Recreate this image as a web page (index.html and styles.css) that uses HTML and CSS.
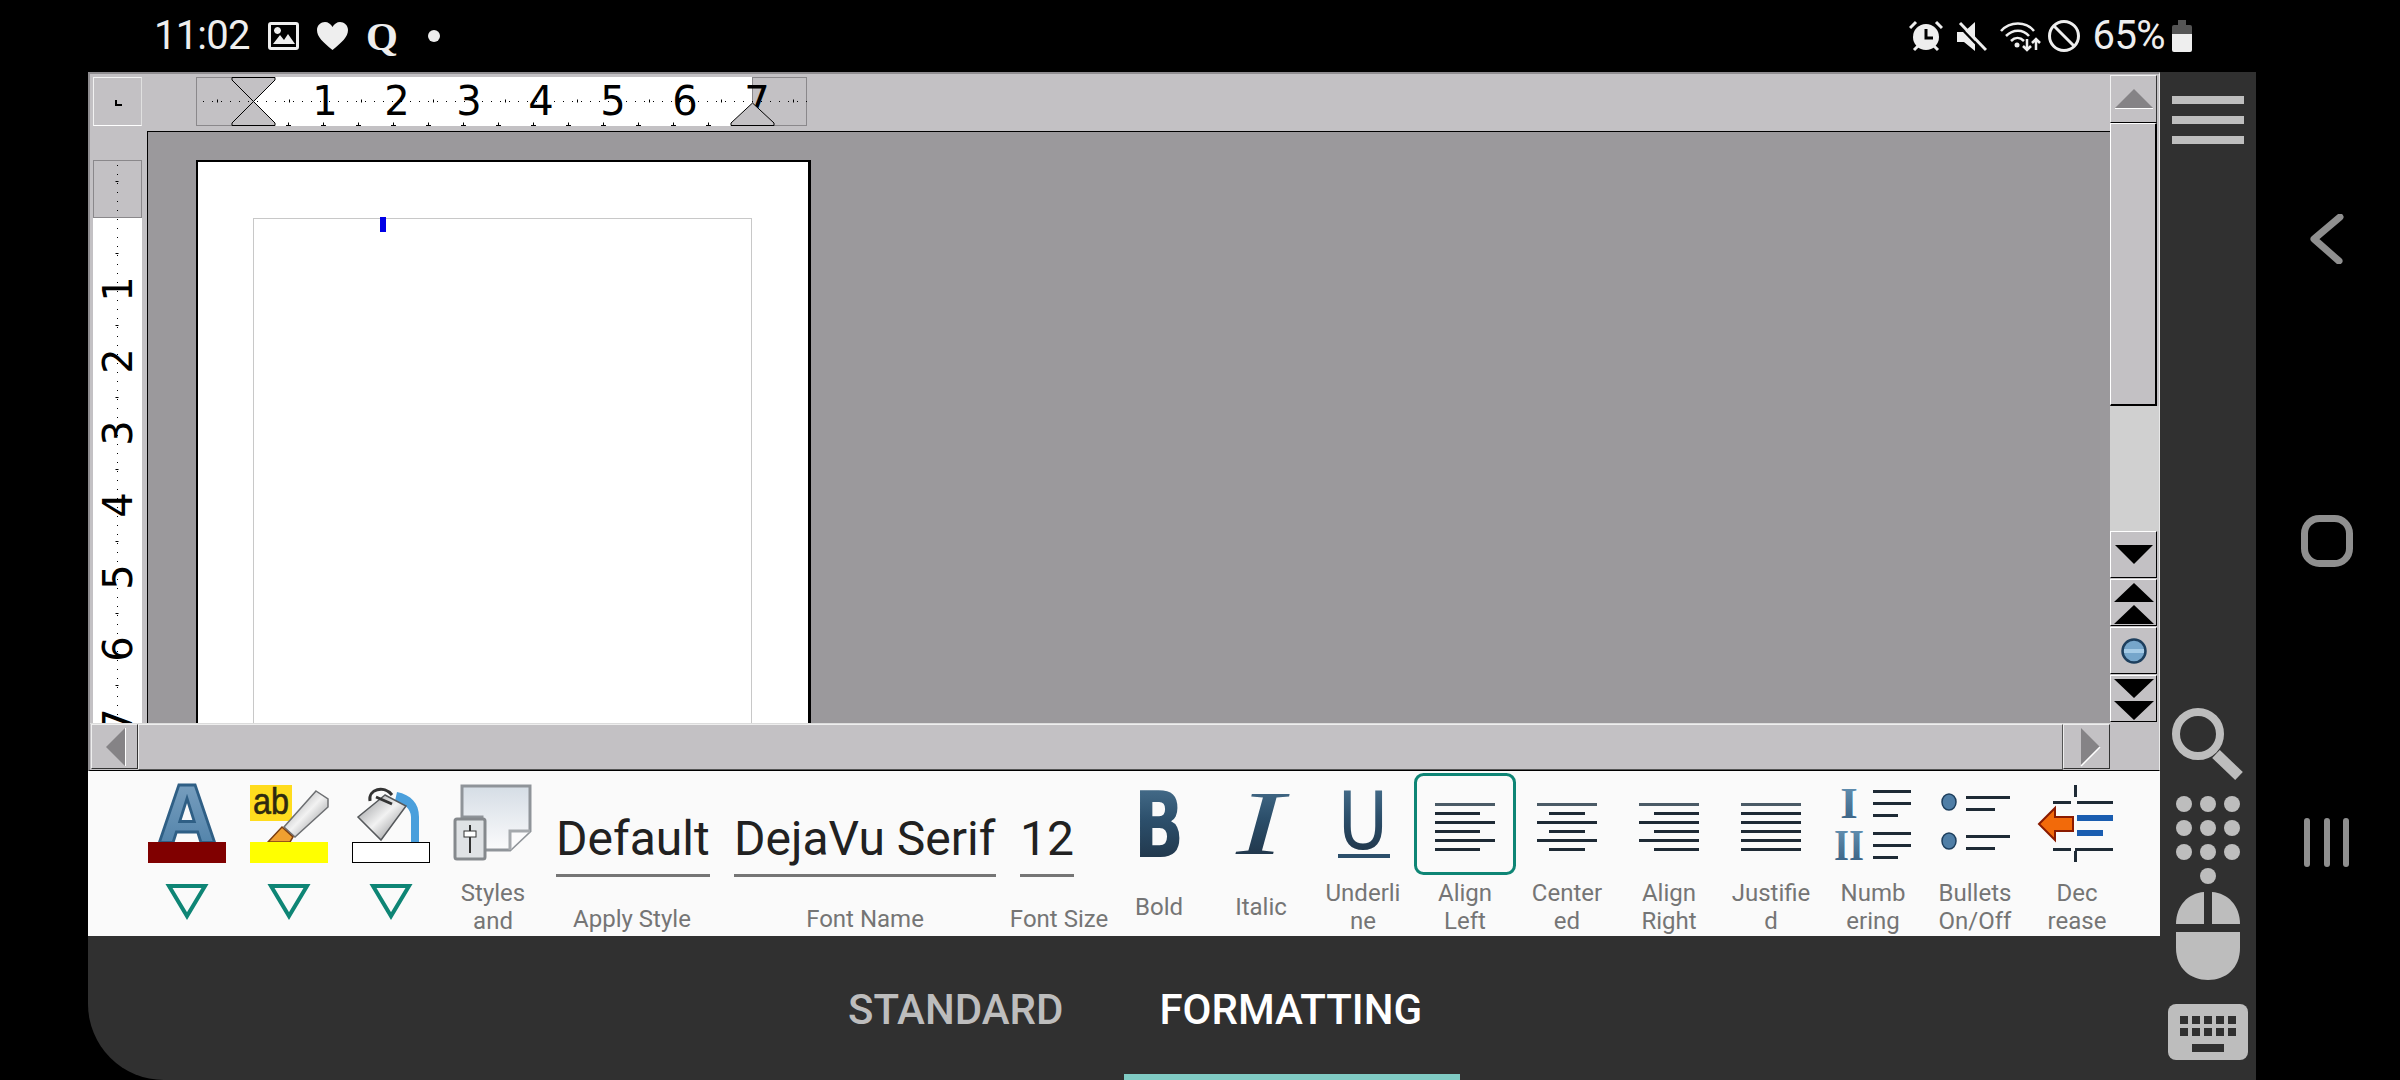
FILE: index.html
```html
<!DOCTYPE html>
<html lang="en">
<head>
    <meta charset="UTF-8">
    <title>Writer - Formatting</title>
    <link rel="stylesheet" href="styles.css">
</head>
<body>
<svg class="defs" width="0" height="0">
    <defs>
        <linearGradient id="steel" x1="0" y1="0" x2="0" y2="1">
            <stop offset="0" stop-color="#4f7896"/>
            <stop offset="0.45" stop-color="#2c4f6b"/>
            <stop offset="1" stop-color="#1c2c3d"/>
        </linearGradient>
        <linearGradient id="letterA" x1="0" y1="0" x2="0" y2="1">
            <stop offset="0" stop-color="#7fa4c2"/>
            <stop offset="1" stop-color="#4a7da6"/>
        </linearGradient>
        <linearGradient id="numeral" x1="0" y1="0" x2="0" y2="1">
            <stop offset="0" stop-color="#6b9abb"/>
            <stop offset="1" stop-color="#33597c"/>
        </linearGradient>
        <linearGradient id="metal" x1="0" y1="0" x2="1" y2="1">
            <stop offset="0" stop-color="#8d8f92"/>
            <stop offset="0.5" stop-color="#f2f2f2"/>
            <stop offset="1" stop-color="#77797c"/>
        </linearGradient>
        <linearGradient id="paper" x1="0" y1="0" x2="0" y2="1">
            <stop offset="0" stop-color="#d5dde5"/>
            <stop offset="1" stop-color="#fbfbfc"/>
        </linearGradient>
    </defs>
</svg>

<div class="screen">
    <div class="status">
        <div class="status-left">
            <span class="status-text time">11:02</span>
            <svg class="ic" width="31" height="28" viewBox="0 0 31 28"><path fill="#eee" fill-rule="evenodd" d="M3 0H28A3 3 0 0 1 31 3V25A3 3 0 0 1 28 28H3A3 3 0 0 1 0 25V3A3 3 0 0 1 3 0ZM3 3V25H28V3ZM5 22 12 13 16 18 20 12 27 22ZM9.500 5A3.500 3.500 0 1 1 9.490 5Z"/></svg>
            <svg class="ic" width="31" height="28" viewBox="0 0 31 28"><path fill="#eee" d="M15.500 28C6 20 0 15 0 8 0 3 4 0 8 0 11 0 14 2 15.500 5 17 2 20 0 23 0 27 0 31 3 31 8 31 15 25 20 15.500 28Z"/></svg>
            <span class="status-q">Q</span>
            <span class="status-dot"></span>
        </div>
        <div class="status-right">
            <svg class="ic ic-alarm" width="34" height="32" viewBox="0 0 34 32">
                <path d="M1 8 7 2M33 8 27 2M5 30 9 26M29 30 25 26" stroke="#eee" stroke-width="3" fill="none"/>
                <circle cx="17" cy="17" r="13" fill="#eee"/>
                <path d="M17 9V18H24" stroke="#000" stroke-width="3" fill="none"/>
            </svg>
            <svg class="ic ic-mute" width="30" height="31" viewBox="0 0 30 31">
                <path fill="#eee" d="M0 11H7L18 1V30L7 21H0Z"/>
                <path d="M0 3 26 30" stroke="#000" stroke-width="2.500"/>
                <path d="M3 2 29 29" stroke="#eee" stroke-width="3"/>
            </svg>
            <svg class="ic ic-wifi" width="41" height="31" viewBox="0 0 41 31">
                <g stroke="#eee" stroke-width="2.500" fill="none">
                    <path d="M1 10C10 0 26 0 34 10"/>
                    <path d="M6 15C13 8 23 8 29 15"/>
                    <path d="M11 20C15 16 20 16 24 20"/>
                    <path d="M27 18V29M23 25 27 29 31 25"/>
                    <path d="M36 29V18M32 22 36 18 40 22"/>
                </g>
                <circle cx="17" cy="24" r="2.500" fill="#eee"/>
            </svg>
            <svg class="ic ic-block" width="32" height="32" viewBox="0 0 32 32">
                <circle cx="16" cy="16" r="14.500" stroke="#eee" stroke-width="3" fill="none"/>
                <path d="M6 6 26 26" stroke="#eee" stroke-width="3"/>
            </svg>
            <span class="status-text pct">65%</span>
            <svg class="ic" width="20" height="32" viewBox="0 0 20 32">
                <path fill="#555" d="M6 0H14V5H18A2 2 0 0 1 20 7V14H0V7A2 2 0 0 1 2 5H6Z"/>
                <path fill="#eee" d="M0 14H20V30A2 2 0 0 1 18 32H2A2 2 0 0 1 0 30Z"/>
            </svg>
        </div>
    </div>

    <div class="app">
        <div class="office">
            <div class="corner-cell">
                <div class="corner-btn">
                    <svg width="47" height="47" viewBox="0 0 47 47"><path d="M22 22V27H28" stroke="#000" stroke-width="2" fill="none"/></svg>
                </div>
            </div>

            <div class="hruler-cell">
                <svg class="hruler" width="611" height="49" viewBox="0 0 611 49">
                    <rect x="0" y="0" width="611" height="49" fill="#fff"/>
                    <rect x="0.500" y="0.500" width="57" height="48" class="margin-area"/>
                    <rect x="556.500" y="0.500" width="54" height="48" class="margin-area"/>
                    <line x1="7" y1="24.500" x2="611" y2="24.500" class="dots"/>
                    <line x1="21" y1="24" x2="611" y2="24" class="half-ticks"/>
                    <line x1="92" y1="47" x2="560" y2="47" class="low-ticks"/>
                    <line x1="90" y1="48.500" x2="560" y2="48.500" class="low-base"/>
                    <text x="129" y="38" class="ruler-num">1</text>
                    <text x="201" y="38" class="ruler-num">2</text>
                    <text x="273" y="38" class="ruler-num">3</text>
                    <text x="345" y="38" class="ruler-num">4</text>
                    <text x="417" y="38" class="ruler-num">5</text>
                    <text x="489" y="38" class="ruler-num">6</text>
                    <text x="561" y="38" class="ruler-num">7</text>
                    <path class="marker" d="M36 .5H79V3L57.500 24.500 36 3Z"/>
                    <path class="marker" d="M57.500 24.500 79 46V48.500H36V46Z"/>
                    <path class="marker" d="M556.500 26 578 46V48.500H535V46Z"/>
                </svg>
            </div>

            <div class="scroll-v">
                <div class="sb-btn sb-up">
                    <svg width="44" height="44" viewBox="0 0 44 44">
                        <path d="M22 12 41 31H3Z" fill="#858386"/>
                        <path d="M3 31.500H41" stroke="#fff"/>
                    </svg>
                </div>
                <div class="sb-thumb"></div>
                <div class="sb-track"></div>
                <div class="sb-btn sb-small">
                    <svg width="44" height="44" viewBox="0 0 44 44"><path d="M3 12H41L22 31Z"/></svg>
                </div>
                <div class="sb-btn sb-small">
                    <svg width="44" height="44" viewBox="0 0 44 44"><path d="M22 2 42 21H2ZM22 24 42 43H2Z"/></svg>
                </div>
                <div class="sb-btn sb-small">
                    <svg width="44" height="44" viewBox="0 0 44 44">
                        <circle cx="22" cy="22" r="11.500" fill="#76a6cb" stroke="#1d3f5e" stroke-width="2.500"/>
                        <rect x="12" y="20" width="20" height="4" fill="#a5cbe6"/>
                    </svg>
                </div>
                <div class="sb-btn sb-small">
                    <svg width="44" height="44" viewBox="0 0 44 44"><path d="M2 2H42L22 21ZM2 24H42L22 43Z"/></svg>
                </div>
            </div>

            <div class="vruler-cell">
                <svg class="vruler" width="49" height="563" viewBox="0 0 49 563">
                    <rect x="0" y="0" width="49" height="563" fill="#fff"/>
                    <rect x="0.500" y="0.500" width="48" height="57" class="margin-area"/>
                    <line x1="24.500" y1="5" x2="24.500" y2="563" class="dots"/>
                    <line x1="24" y1="21" x2="24" y2="563" class="half-ticks"/>
                    <text transform="translate(39 129) rotate(-90)" class="ruler-num">1</text>
                    <text transform="translate(39 201) rotate(-90)" class="ruler-num">2</text>
                    <text transform="translate(39 273) rotate(-90)" class="ruler-num">3</text>
                    <text transform="translate(39 345) rotate(-90)" class="ruler-num">4</text>
                    <text transform="translate(39 417) rotate(-90)" class="ruler-num">5</text>
                    <text transform="translate(39 489) rotate(-90)" class="ruler-num">6</text>
                    <text transform="translate(39 561) rotate(-90)" class="ruler-num">7</text>
                </svg>
            </div>

            <div class="doc">
                <div class="page">
                    <div class="page-body">
                        <div class="cursor"></div>
                    </div>
                </div>
            </div>

            <div class="scroll-h">
                <div class="sb-btn sb-h">
                    <svg width="44" height="44" viewBox="0 0 44 44">
                        <path d="M13 22 32 3V41Z" fill="#858386"/>
                        <path d="M32.500 3V41" stroke="#fff"/>
                    </svg>
                </div>
                <div class="sb-hthumb"></div>
                <div class="sb-btn sb-h">
                    <svg width="44" height="44" viewBox="0 0 44 44">
                        <path d="M16 3 35 22 16 41Z" fill="#858386"/>
                        <path d="M35 22 16 41" stroke="#fff" stroke-width="1.500"/>
                    </svg>
                </div>
            </div>
            <div class="corner-end"></div>
        </div>

        <div class="toolbar">
            <div class="tool">
                <svg width="102" height="165" viewBox="0 0 102 165">
                    <text x="51" y="71" textLength="56" lengthAdjust="spacingAndGlyphs" class="glyph-a">A</text>
                    <rect x="12" y="71" width="78" height="21" fill="#800000"/>
                    <path d="M33 115H69L51 145Z" class="drop"/>
                </svg>
            </div>
            <div class="tool">
                <svg width="102" height="165" viewBox="0 0 102 165">
                    <rect x="12" y="14" width="42" height="36" fill="#ffdc1e"/>
                    <text x="33" y="43" textLength="36" lengthAdjust="spacingAndGlyphs" class="glyph-ab">ab</text>
                    <path d="M78 20 90 28 90 36 57 66 46 56Z" fill="url(#metal)" stroke="#6d6f72" stroke-width="1.500"/>
                    <path d="M44 56 55 66 52 71H30Z" fill="#f0a030" stroke="#7a3d10" stroke-width="1.500"/>
                    <rect x="12" y="71" width="78" height="21" fill="#ffff00"/>
                    <path d="M33 115H69L51 145Z" class="drop"/>
                </svg>
            </div>
            <div class="tool">
                <svg width="102" height="165" viewBox="0 0 102 165">
                    <path d="M57 21C71 24 79 32 79 46V71H71V46C71 38 64 32 55 30Z" fill="#4a9fdc"/>
                    <path d="M45 24 18 46 41 69 66 35Z" fill="url(#metal)" stroke="#55585b" stroke-width="1.500"/>
                    <path d="M30 30C28 18 44 14 52 24M36 26 52 33" stroke="#333" stroke-width="3" fill="none"/>
                    <rect x="12.500" y="71.500" width="77" height="20" fill="#fff" stroke="#000"/>
                    <path d="M33 115H69L51 145Z" class="drop"/>
                </svg>
            </div>
            <div class="tool">
                <div class="tool-icon">
                    <svg width="102" height="108" viewBox="0 0 102 108">
                        <path d="M20 15H88V60L68 79H40V46H20Z" fill="url(#paper)" stroke="#8f9499" stroke-width="3"/>
                        <path d="M68 79V60H88" fill="#fbfbfc" stroke="#a5a9ad" stroke-width="3"/>
                        <rect x="13" y="48" width="30" height="40" rx="2" fill="#dfe2e5" stroke="#85898d" stroke-width="3"/>
                        <path d="M28 54V82" stroke="#333" stroke-width="2"/>
                        <rect x="22" y="60" width="12" height="6" fill="#fff" stroke="#333"/>
                    </svg>
                </div>
                <div class="tool-label">Styles<br>and</div>
            </div>

            <div class="field field-style">
                <div class="field-value">Default</div>
                <div class="field-label">Apply Style</div>
            </div>
            <div class="field field-font">
                <div class="field-value">DejaVu Serif</div>
                <div class="field-label">Font Name</div>
            </div>
            <div class="field field-size">
                <div class="field-value">12</div>
                <div class="field-label">Font Size</div>
            </div>

            <div class="tool">
                <div class="tool-icon">
                    <svg width="102" height="108" viewBox="0 0 102 108">
                        <text x="51" y="86" textLength="50" lengthAdjust="spacingAndGlyphs" class="glyph-fmt glyph-b">B</text>
                    </svg>
                </div>
                <div class="tool-label">Bold</div>
            </div>
            <div class="tool">
                <div class="tool-icon">
                    <svg width="102" height="108" viewBox="0 0 102 108">
                        <text x="50" y="83" textLength="48" lengthAdjust="spacingAndGlyphs" class="glyph-fmt glyph-i">I</text>
                    </svg>
                </div>
                <div class="tool-label">Italic</div>
            </div>
            <div class="tool">
                <div class="tool-icon">
                    <svg width="102" height="108" viewBox="0 0 102 108">
                        <text x="51" y="78" textLength="50" lengthAdjust="spacingAndGlyphs" class="glyph-fmt glyph-u">U</text>
                        <rect x="26" y="83" width="52" height="4" fill="#2c4f6b"/>
                    </svg>
                </div>
                <div class="tool-label">Underli<br>ne</div>
            </div>
            <div class="tool">
                <div class="tool-icon">
                    <svg width="102" height="108" viewBox="0 0 102 108">
                        <rect x="1.500" y="3.500" width="99" height="99" rx="8" fill="none" stroke="#0e8575" stroke-width="3"/>
                        <rect x="21" y="32" width="60" height="3" class="line-top"/>
                        <rect x="21" y="41" width="45" height="3" class="line"/>
                        <rect x="21" y="50" width="60" height="3" class="line"/>
                        <rect x="21" y="59" width="45" height="3" class="line"/>
                        <rect x="21" y="68" width="60" height="3" class="line"/>
                        <rect x="21" y="77" width="45" height="3" class="line"/>
                    </svg>
                </div>
                <div class="tool-label">Align<br>Left</div>
            </div>
            <div class="tool">
                <div class="tool-icon">
                    <svg width="102" height="108" viewBox="0 0 102 108">
                        <rect x="21" y="32" width="60" height="3" class="line-top"/>
                        <rect x="33" y="41" width="36" height="3" class="line"/>
                        <rect x="21" y="50" width="60" height="3" class="line"/>
                        <rect x="33" y="59" width="36" height="3" class="line"/>
                        <rect x="21" y="68" width="60" height="3" class="line"/>
                        <rect x="33" y="77" width="36" height="3" class="line"/>
                    </svg>
                </div>
                <div class="tool-label">Center<br>ed</div>
            </div>
            <div class="tool">
                <div class="tool-icon">
                    <svg width="102" height="108" viewBox="0 0 102 108">
                        <rect x="21" y="32" width="60" height="3" class="line-top"/>
                        <rect x="36" y="41" width="45" height="3" class="line"/>
                        <rect x="21" y="50" width="60" height="3" class="line"/>
                        <rect x="36" y="59" width="45" height="3" class="line"/>
                        <rect x="21" y="68" width="60" height="3" class="line"/>
                        <rect x="36" y="77" width="45" height="3" class="line"/>
                    </svg>
                </div>
                <div class="tool-label">Align<br>Right</div>
            </div>
            <div class="tool">
                <div class="tool-icon">
                    <svg width="102" height="108" viewBox="0 0 102 108">
                        <rect x="21" y="32" width="60" height="3" class="line-top"/>
                        <rect x="21" y="41" width="60" height="3" class="line"/>
                        <rect x="21" y="50" width="60" height="3" class="line"/>
                        <rect x="21" y="59" width="60" height="3" class="line"/>
                        <rect x="21" y="68" width="60" height="3" class="line"/>
                        <rect x="21" y="77" width="60" height="3" class="line"/>
                    </svg>
                </div>
                <div class="tool-label">Justifie<br>d</div>
            </div>
            <div class="tool">
                <div class="tool-icon">
                    <svg width="102" height="108" viewBox="0 0 102 108">
                        <text x="27" y="47" class="glyph-num">I</text>
                        <text x="27" y="89" textLength="30" lengthAdjust="spacingAndGlyphs" class="glyph-num">II</text>
                        <rect x="51" y="19" width="38" height="3" class="line"/>
                        <rect x="51" y="31" width="38" height="3" class="line"/>
                        <rect x="51" y="43" width="25" height="3" class="line"/>
                        <rect x="51" y="61" width="38" height="3" class="line"/>
                        <rect x="51" y="73" width="38" height="3" class="line"/>
                        <rect x="51" y="85" width="25" height="3" class="line"/>
                    </svg>
                </div>
                <div class="tool-label">Numb<br>ering</div>
            </div>
            <div class="tool">
                <div class="tool-icon">
                    <svg width="102" height="108" viewBox="0 0 102 108">
                        <ellipse cx="25" cy="31" rx="7" ry="8" class="bullet"/>
                        <ellipse cx="25" cy="70" rx="7" ry="8" class="bullet"/>
                        <rect x="42" y="25" width="44" height="3" class="line"/>
                        <rect x="42" y="37" width="29" height="3" class="line"/>
                        <rect x="42" y="64" width="44" height="3" class="line"/>
                        <rect x="42" y="76" width="29" height="3" class="line"/>
                    </svg>
                </div>
                <div class="tool-label">Bullets<br>On/Off</div>
            </div>
            <div class="tool">
                <div class="tool-icon">
                    <svg width="102" height="108" viewBox="0 0 102 108">
                        <rect x="48" y="14" width="3" height="12" class="line"/>
                        <rect x="27" y="30" width="18" height="3" class="line"/>
                        <rect x="51" y="30" width="36" height="3" class="line"/>
                        <rect x="51" y="44" width="36" height="6" fill="#1a5db0"/>
                        <rect x="51" y="59" width="26" height="6" fill="#1a5db0"/>
                        <path d="M13 53 29 37V46H47V60H29V69Z" fill="#f26a0a" stroke="#8a1a00" stroke-width="2"/>
                        <rect x="27" y="77" width="18" height="3" class="line"/>
                        <rect x="49" y="77" width="38" height="3" class="line"/>
                        <rect x="48" y="80" width="3" height="11" class="line"/>
                    </svg>
                </div>
                <div class="tool-label">Dec<br>rease</div>
            </div>
        </div>

        <div class="tabs">
            <div class="tab">STANDARD</div>
            <div class="tab tab-active">FORMATTING</div>
        </div>
    </div>

    <div class="side">
        <div class="hamburger">
            <span></span>
            <span></span>
            <span></span>
        </div>
        <svg class="side-search" width="96" height="84" viewBox="0 0 96 84">
            <circle cx="38" cy="30" r="22" fill="none" stroke="#bdbdbd" stroke-width="8"/>
            <path d="M56 50 79 72" stroke="#bdbdbd" stroke-width="11"/>
        </svg>
        <svg class="side-remote" width="96" height="184" viewBox="0 0 96 184">
            <g fill="#bdbdbd">
                <circle cx="24" cy="8" r="8"/><circle cx="48" cy="8" r="8"/><circle cx="72" cy="8" r="8"/>
                <circle cx="24" cy="32" r="8"/><circle cx="48" cy="32" r="8"/><circle cx="72" cy="32" r="8"/>
                <circle cx="24" cy="56" r="8"/><circle cx="48" cy="56" r="8"/><circle cx="72" cy="56" r="8"/>
                <circle cx="48" cy="80" r="8"/>
                <path d="M16 128C16 110 28 97 44 96V128Z"/>
                <path d="M80 128C80 110 68 97 52 96V128Z"/>
                <path d="M16 136H80V152C80 172 66 184 48 184 30 184 16 172 16 152Z"/>
            </g>
        </svg>
        <svg class="side-keys" width="96" height="56" viewBox="0 0 96 56">
            <rect x="8" y="0" width="80" height="56" rx="8" fill="#bdbdbd"/>
            <g fill="#303030">
                <rect x="20" y="12" width="8" height="8"/><rect x="32" y="12" width="8" height="8"/><rect x="44" y="12" width="8" height="8"/><rect x="56" y="12" width="8" height="8"/><rect x="68" y="12" width="8" height="8"/>
                <rect x="20" y="24" width="8" height="8"/><rect x="32" y="24" width="8" height="8"/><rect x="44" y="24" width="8" height="8"/><rect x="56" y="24" width="8" height="8"/><rect x="68" y="24" width="8" height="8"/>
                <rect x="32" y="40" width="32" height="8"/>
            </g>
        </svg>
    </div>

    <div class="nav">
        <svg width="34" height="50" viewBox="0 0 34 50"><path d="M30 3 4 25 29 47" class="nav-stroke"/></svg>
        <svg width="52" height="52" viewBox="0 0 52 52"><rect x="3.500" y="3.500" width="45" height="45" rx="15" class="nav-stroke"/></svg>
        <svg width="46" height="49" viewBox="0 0 46 49">
            <rect x="0" y="0" width="6" height="49" rx="3" fill="#8f8f8f"/>
            <rect x="20" y="0" width="6" height="49" rx="3" fill="#8f8f8f"/>
            <rect x="39" y="0" width="6" height="49" rx="3" fill="#8f8f8f"/>
        </svg>
    </div>
</div>
</body>
</html>
```

FILE: styles.css
```css
body {
    margin: 0;
    background: #000;
    font-family: Roboto, "Noto Sans", sans-serif;
    overflow: hidden;
}
.defs {
    position: absolute;
}
svg {
    display: block;
}
.screen {
    display: grid;
    grid-template-columns: 88px 2072px 96px 144px;
    grid-template-rows: 72px 1008px;
    width: 2400px;
    height: 1080px;
}

/* status bar */
.status {
    grid-column: 1 / 5;
    display: flex;
    justify-content: space-between;
    align-items: center;
    padding: 0 208px 0 154px;
}
.status-left, .status-right {
    display: flex;
    align-items: center;
}
.status-text {
    color: #eee;
    font-size: 40px;
    line-height: 72px;
}
.time {
    width: 114px;
    letter-spacing: -0.8px;
}
.status-left .ic {
    margin-right: 18px;
}
.status-q {
    width: 62px;
    color: #eee;
    font-family: "Liberation Serif", serif;
    font-size: 41px;
    font-weight: bold;
}
.status-dot {
    width: 12px;
    height: 12px;
    border-radius: 50%;
    background: #eee;
}
.ic-alarm {
    margin-right: 14px;
}
.ic-mute {
    margin-right: 13px;
}
.ic-wifi {
    margin-right: 7px;
}
.ic-block {
    margin-right: 13px;
}
.pct {
    margin-right: 7px;
    letter-spacing: -0.6px;
}

.app {
    grid-column: 2;
    display: flex;
    flex-direction: column;
    height: 1008px;
}

/* libreoffice window */
.office {
    display: grid;
    grid-template-columns: 57px 1963px 49px;
    grid-template-rows: 57px 592px 47px;
    background: #c3c1c4;
    border-top: 2px solid #8f8d90;
    border-left: 2px solid #8f8d90;
    border-right: 1px solid #e8e8e8;
    border-bottom: 1px solid #000;
}
.corner-cell {
    padding: 3px 0 0 3px;
}
.corner-btn {
    width: 47px;
    height: 47px;
    border: 1px solid;
    border-color: #f2f2f2 #e0e0e0 #fff #f2f2f2;
}
.hruler-cell {
    padding: 3px 0 0 49px;
}
.margin-area {
    fill: #c3c1c4;
    stroke: #8a888b;
}
.dots {
    stroke: #000;
    stroke-width: 1;
    stroke-dasharray: 1 8;
}
.half-ticks {
    stroke: #000;
    stroke-width: 3;
    stroke-dasharray: 1 71;
}
.low-ticks {
    stroke: #000;
    stroke-width: 3;
    stroke-dasharray: 1 34;
}
.low-base {
    stroke: #000;
    stroke-width: 1;
    stroke-dasharray: 5 30;
}
.ruler-num {
    font-family: "DejaVu Sans", sans-serif;
    font-size: 40px;
    text-anchor: middle;
    fill: #000;
}
.marker {
    fill: #c3c1c4;
    stroke: #000;
    stroke-width: 1;
}
.vruler-cell {
    padding: 29px 0 0 3px;
    overflow: hidden;
}
.doc {
    background: #9b999c;
    border-top: 1px solid #000;
    border-left: 1px solid #000;
    padding: 28px 0 0 48px;
    overflow: hidden;
    height: 592px;
    box-sizing: border-box;
}
.page {
    width: 615px;
    height: 620px;
    background: #fff;
    border: solid #000;
    border-width: 2px 3px 0 2px;
    padding: 56px 0 0 55px;
    box-sizing: border-box;
}
.page-body {
    position: relative;
    width: 499px;
    height: 580px;
    border: 1px solid #c8c8c8;
    box-sizing: border-box;
}
.cursor {
    position: absolute;
    left: 126px;
    top: -2px;
    width: 6px;
    height: 15px;
    background: #0000e6;
}

/* scrollbars */
.scroll-v {
    grid-column: 3;
    grid-row: 1 / 3;
    display: flex;
    flex-direction: column;
    padding-top: 1px;
}
.sb-btn {
    display: flex;
    align-items: center;
    justify-content: center;
    box-sizing: border-box;
    flex: none;
    border: 1px solid;
    border-color: #fff #000 #000 #fff;
    background: #c3c1c4;
}
.sb-up {
    width: 47px;
    height: 48px;
    border-color: #f2f2f2 #333 #000 #f2f2f2;
}
.sb-thumb {
    width: 47px;
    height: 283px;
    box-sizing: border-box;
    flex: none;
    border: 1px solid;
    border-width: 1px 2px 2px 1px;
    border-color: #fff #000 #000 #fff;
}
.sb-track {
    flex: 1;
    background: #d0d0d0;
}
.sb-small {
    width: 47px;
    height: 47px;
    margin-bottom: 1px;
}
.sb-small path {
    fill: #000;
}
.scroll-h {
    grid-column: 1 / 3;
    display: flex;
    padding-left: 1px;
    background: #c3c1c4;
    border-top: 1px solid #dcdcdc;
}
.sb-h {
    width: 47px;
    height: 45px;
    border-color: #eee #333 #333 #eee;
}
.sb-hthumb {
    flex: 1;
    border: 1px solid;
    border-color: #eee #555 #555 #eee;
}
.corner-end {
    background: #c3c1c4;
}

/* toolbar */
.toolbar {
    display: flex;
    box-sizing: border-box;
    height: 165px;
    padding-left: 48px;
    background: #fafafa;
    overflow: hidden;
}
.tool {
    flex: none;
    width: 102px;
    height: 165px;
}
.tool-icon {
    height: 107px;
}
.tool-label, .field-label {
    display: flex;
    align-items: center;
    justify-content: center;
    height: 57px;
    color: #757575;
    font-size: 24px;
    line-height: 28px;
    text-align: center;
    white-space: nowrap;
}
.field {
    flex: none;
    display: flex;
    flex-direction: column;
    box-sizing: border-box;
}
.field-style {
    width: 176px;
}
.field-font {
    width: 290px;
}
.field-size {
    width: 98px;
}
.field-value {
    height: 73px;
    margin: 33px 0 2px 12px;
    box-sizing: border-box;
    padding-top: 7px;
    color: #212121;
    font-size: 48px;
    line-height: 56px;
    white-space: nowrap;
    border-bottom: 3px solid #757575;
}
.field-style .field-value {
    width: 154px;
}
.field-font .field-value {
    width: 262px;
    margin-left: 14px;
}
.field-size .field-value {
    width: 54px;
    margin-left: 10px;
}
.field-label {
    height: 57px;
    padding-top: 22px;
    box-sizing: border-box;
}

.drop {
    fill: none;
    stroke: #0e8575;
    stroke-width: 4;
}
.line {
    fill: #1e2a35;
}
.line-top {
    fill: #4a5a66;
}
.bullet {
    fill: #4f7ea6;
    stroke: #1d3f5e;
    stroke-width: 1.500;
}
.glyph-a {
    font-family: "DejaVu Sans", sans-serif;
    font-size: 78px;
    font-weight: bold;
    text-anchor: middle;
    fill: url(#letterA);
    stroke: #2f5f85;
    stroke-width: 3;
}
.glyph-ab {
    font-family: "Liberation Sans", sans-serif;
    font-size: 36px;
    text-anchor: middle;
    fill: #2f2a10;
    stroke: #2f2a10;
    stroke-width: 0.600;
}
.glyph-fmt {
    text-anchor: middle;
    fill: url(#steel);
}
.glyph-b {
    font-family: "DejaVu Sans", sans-serif;
    font-size: 90px;
    font-weight: bold;
}
.glyph-i {
    font-family: "Liberation Serif", serif;
    font-size: 92px;
    font-style: italic;
}
.glyph-u {
    font-family: "DejaVu Sans", sans-serif;
    font-size: 80px;
}
.glyph-num {
    font-family: "Liberation Serif", serif;
    font-size: 45px;
    font-weight: bold;
    text-anchor: middle;
    fill: url(#numeral);
}

/* bottom tabs */
.tabs {
    flex: 1;
    display: flex;
    gap: 25px;
    padding-left: 724px;
    background: #303030;
    border-bottom-left-radius: 76px;
}
.tab {
    display: flex;
    align-items: center;
    box-sizing: border-box;
    padding: 2px 36px 0;
    color: #bdbdbd;
    font-size: 42px;
    font-weight: 500;
}
.tab-active {
    width: 336px;
    padding-left: 35px;
    color: #fff;
    box-shadow: inset 0 -6px 0 #80cbc4;
}

/* right hand panel */
.side {
    grid-column: 3;
    display: flex;
    flex-direction: column;
    height: 1008px;
    box-sizing: border-box;
    padding: 24px 0 20px;
    background: #303030;
}
.hamburger {
    display: flex;
    flex-direction: column;
    gap: 12px;
    padding-left: 12px;
}
.hamburger span {
    width: 72px;
    height: 8px;
    background: #bdbdbd;
}
.side-search {
    margin-top: auto;
}
.side-remote {
    margin-top: 8px;
}
.side-keys {
    margin-top: 24px;
}

/* android nav */
.nav {
    grid-column: 4;
    display: flex;
    flex-direction: column;
    align-items: center;
    gap: 251px;
    padding: 142px 2px 0 0;
}
.nav-stroke {
    fill: none;
    stroke: #8f8f8f;
    stroke-width: 7;
    stroke-linecap: round;
    stroke-linejoin: round;
}
```
